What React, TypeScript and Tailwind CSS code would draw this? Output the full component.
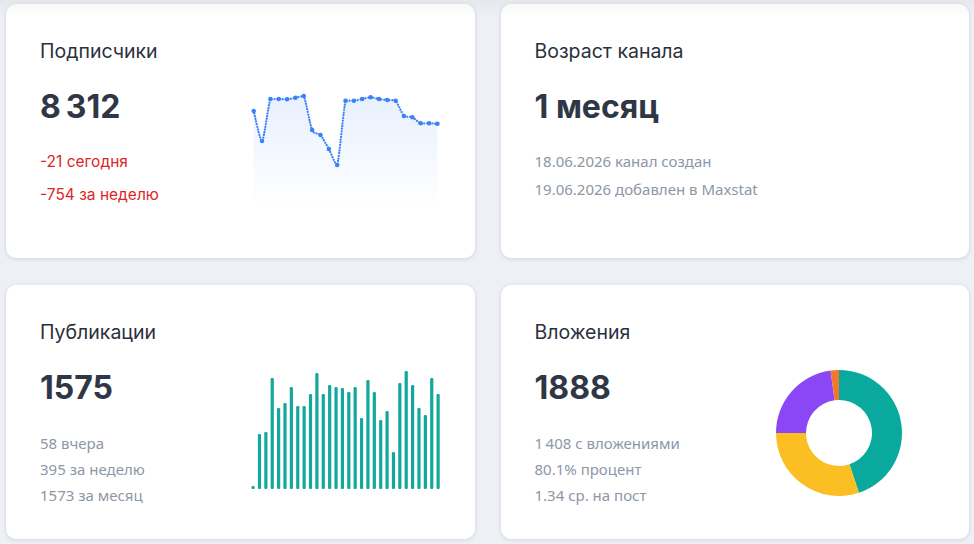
import React from "react";

const linePts = [27, 57, 15, 15, 15.3, 13.7, 12, 46, 51, 65, 81, 16.7, 16.7, 15, 13.3, 15, 16, 16.7, 32, 33.3, 39.3, 39.3, 39.7];
const bars = [3, 55, 57, 111, 81, 86, 102, 83, 83, 95, 116, 95, 104, 102, 101, 97, 102, 71, 109, 97, 69, 78, 37, 106, 118, 104, 81, 74, 111, 95];

function LineChart() {
  const pts = linePts.map((y, i) => [7.7 + i * 8.35, y] as [number, number]);
  let d = `M ${pts[0][0]} ${pts[0][1]}`;
  for (let i = 0; i < pts.length - 1; i++) {
    const p0 = pts[i - 1] || pts[i];
    const p1 = pts[i];
    const p2 = pts[i + 1];
    const p3 = pts[i + 2] || p2;
    const t = 0.12;
    const c1x = p1[0] + (p2[0] - p0[0]) * t;
    let c1y = p1[1] + (p2[1] - p0[1]) * t;
    const c2x = p2[0] - (p3[0] - p1[0]) * t;
    let c2y = p2[1] - (p3[1] - p1[1]) * t;
    const lo = Math.min(p1[1], p2[1]);
    const hi = Math.max(p1[1], p2[1]);
    c1y = Math.max(lo, Math.min(hi, c1y));
    c2y = Math.max(lo, Math.min(hi, c2y));
    d += ` C ${c1x} ${c1y} ${c2x} ${c2y} ${p2[0]} ${p2[1]}`;
  }
  const area = `${d} L ${pts[pts.length - 1][0]} 124 L ${pts[0][0]} 124 Z`;
  return (
    <svg width="200" height="130" viewBox="0 0 200 130" className="shrink-0">
      <defs>
        <linearGradient id="ag" x1="0" y1="0" x2="0" y2="1">
          <stop offset="0%" stopColor="#e8f0fe" />
          <stop offset="100%" stopColor="#ffffff" />
        </linearGradient>
      </defs>
      <path d={area} fill="url(#ag)" />
      <path d={d} fill="none" stroke="#3b82f6" strokeWidth="2.2" strokeDasharray="0.1 2.6" strokeLinecap="round" />
      {pts.map((p, i) => (
        <circle key={i} cx={p[0]} cy={p[1]} r="2.3" fill="#3b82f6" />
      ))}
    </svg>
  );
}

function BarChart() {
  return (
    <svg width="200" height="130" viewBox="0 0 200 130" className="shrink-0">
      {bars.map((h, i) => (
        <rect key={i} x={5.5 + i * 6.38} y={124 - h} width="3.2" height={h} rx="1.2" fill="#12a89c" />
      ))}
    </svg>
  );
}

function arc(cx: number, cy: number, R: number, r: number, a0: number, a1: number) {
  const rad = (a: number) => ((a - 90) * Math.PI) / 180;
  const p = (rr: number, a: number) => [cx + rr * Math.cos(rad(a)), cy + rr * Math.sin(rad(a))];
  const large = a1 - a0 > 180 ? 1 : 0;
  const [x0, y0] = p(R, a0);
  const [x1, y1] = p(R, a1);
  const [x2, y2] = p(r, a1);
  const [x3, y3] = p(r, a0);
  return `M ${x0} ${y0} A ${R} ${R} 0 ${large} 1 ${x1} ${y1} L ${x2} ${y2} A ${r} ${r} 0 ${large} 0 ${x3} ${y3} Z`;
}

function Donut() {
  const segs: [number, number, string][] = [
    [0, 161.6, "#0aa99e"],
    [161.6, 270, "#fbbf24"],
    [270, 352.3, "#8b47f5"],
    [352.3, 360, "#f2762e"],
  ];
  return (
    <svg width="140" height="140" viewBox="0 0 140 140" className="shrink-0">
      {segs.map(([a, b, c], i) => (
        <path key={i} d={arc(70, 70, 63, 33, a, b)} fill={c} />
      ))}
    </svg>
  );
}

function Card({ children }: { children: React.ReactNode }) {
  return (
    <div className="bg-white rounded-[10px] shadow-[0_1px_4px_rgba(15,23,42,0.13)] flex justify-between items-start pt-[33px] pl-[34px] h-[254px]">
      {children}
    </div>
  );
}

const titleCls = "text-[19.5px] leading-[28px] font-normal text-[#2a303c] font-['Inter',sans-serif]";
const numCls = "text-[32px] leading-[40px] font-bold text-[#2f3746] font-['Inter',sans-serif] mt-[22px]";
const grayCls = "text-[15px] text-[#8d97a6] font-['Noto_Sans','Open_Sans',sans-serif]";

export default function App() {
  return (
    <div className="relative w-full h-[544px] bg-[#edf0f5] pt-[4px] pl-[6px] pr-[5px] pb-[5px] grid grid-cols-2 gap-x-[26px] gap-y-[27px]">
      <div className="pointer-events-none absolute inset-x-0 top-0 h-[18px] bg-gradient-to-b from-[rgba(0,0,0,0.035)] to-transparent z-10" />
      <Card>
        <div className="flex flex-col">
          <div className={titleCls}>Подписчики</div>
          <div className={numCls}>8{"\u202F"}312</div>
          <div className="mt-[25px] flex flex-col gap-[13px] text-[15.5px] leading-[20px] text-[#dc2626] font-['Inter',sans-serif]">
            <div>-21 сегодня</div>
            <div>-754 за неделю</div>
          </div>
        </div>
        <div className="mt-[47px] mr-[29px]">
          <LineChart />
        </div>
      </Card>
      <Card>
        <div className="flex flex-col">
          <div className={titleCls}>Возраст канала</div>
          <div className={numCls}>1 месяц</div>
          <div className={`mt-[24px] flex flex-col gap-[8px] leading-[20px] ${grayCls}`}>
            <div>18.06.2026 канал создан</div>
            <div>19.06.2026 добавлен в Maxstat</div>
          </div>
        </div>
      </Card>
      <Card>
        <div className="flex flex-col">
          <div className={titleCls}>Публикации</div>
          <div className={numCls}>1575</div>
          <div className={`mt-[25px] flex flex-col gap-[6px] leading-[20px] ${grayCls}`}>
            <div>58 вчера</div>
            <div>395 за неделю</div>
            <div>1573 за месяц</div>
          </div>
        </div>
        <div className="mt-[47px] mr-[29px]">
          <BarChart />
        </div>
      </Card>
      <Card>
        <div className="flex flex-col">
          <div className={titleCls}>Вложения</div>
          <div className={numCls}>1888</div>
          <div className={`mt-[25px] flex flex-col gap-[6px] leading-[20px] ${grayCls}`}>
            <div>1{"\u202F"}408 с вложениями</div>
            <div>80.1% процент</div>
            <div>1.34 ср. на пост</div>
          </div>
        </div>
        <div className="mt-[45px] mr-[60px]">
          <Donut />
        </div>
      </Card>
    </div>
  );
}
